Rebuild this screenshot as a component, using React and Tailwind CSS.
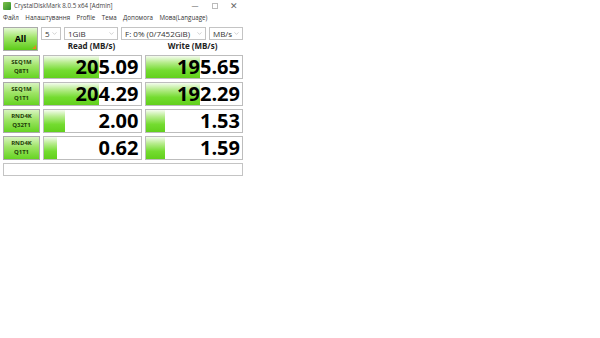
import { ChevronDown } from 'lucide-react'

const rows = [
  { a: 'SEQ1M', b: 'Q8T1', read: '205.09', rw: 55, write: '195.65', ww: 54 },
  { a: 'SEQ1M', b: 'Q1T1', read: '204.29', rw: 55, write: '192.29', ww: 54 },
  { a: 'RND4K', b: 'Q32T1', read: '2.00', rw: 21, write: '1.53', ww: 19 },
  { a: 'RND4K', b: 'Q1T1', read: '0.62', rw: 13, write: '1.59', ww: 19 },
]

const barBg = 'bg-[linear-gradient(to_bottom,#f4fcee_0%,#b6ec8c_30%,#74dc30_65%,#62d01c_100%)]'

function Combo({ label, className }) {
  return (
    <div className={`flex h-[13px] items-center justify-between border border-[#c4c4c4] bg-white pl-[3px] pr-[2px] text-[8px] text-[#333] ${className}`}>
      <span>{label}</span>
      <ChevronDown size={7} strokeWidth={1.5} className="text-[#999]" />
    </div>
  )
}

function Meter({ value, width }) {
  return (
    <div className="relative h-[24px] flex-1 border border-[#bdbdbd] bg-white">
      <div className={`absolute inset-y-0 left-0 ${barBg}`} style={{ width }} />
      <div className="relative flex h-full items-center justify-end pr-[2px] text-[20px] font-bold leading-none text-black">
        {value}
      </div>
    </div>
  )
}

export default function App() {
  return (
    <div className="h-[338px] w-[600px] bg-white font-['Open_Sans',sans-serif] text-[#222]">
      <div className="w-[246px]">
        {/* title bar */}
        <div className="flex h-[12px] items-center">
          <div className="ml-[3px] h-[8px] w-[8px] rounded-[1px] bg-[linear-gradient(135deg,#7fc04a,#2f8f2a)]" />
          <span className="ml-[3px] text-[6.2px] text-[#444]">CrystalDiskMark 8.0.5 x64 [Admin]</span>
          <div className="ml-auto flex items-center text-[#666]">
            <span className="w-[26px] text-center text-[7px]">—</span>
            <span className="mx-[4px] h-[6px] w-[6px] border border-[#bbb]" />
            <span className="w-[24px] text-center text-[9px]">✕</span>
          </div>
        </div>
        {/* menu */}
        <div className="flex h-[12px] items-center gap-[6.5px] pl-[3px] text-[6.2px] text-[#333]">
          <span>Файл</span>
          <span>Налаштування</span>
          <span>Profile</span>
          <span>Тема</span>
          <span>Допомога</span>
          <span>Мова(Language)</span>
        </div>

        <div className="flex flex-col px-[3px] pt-[3px]">
          <div className="flex gap-[3px]">
            <div className="relative flex h-[24px] w-[37px] items-center justify-center border border-[#aaa] bg-[linear-gradient(to_bottom,#e4f8d4_0%,#9ee466_45%,#5ccc18_100%)] text-[9px] font-bold text-black">
              All
              <div className="absolute bottom-[1px] right-[1px] h-0 w-0 border-l-[4px] border-t-[4px] border-l-transparent border-t-transparent border-b-0 border-r-[4px] border-r-[#e08a20] border-b-[#e08a20]" />
            </div>
            <div className="flex flex-1 flex-col">
              <div className="flex gap-[3px]">
                <Combo label="5" className="w-[20px]" />
                <Combo label="1GiB" className="w-[54px]" />
                <Combo label="F: 0% (0/7452GiB)" className="w-[85px]" />
                <Combo label="MB/s" className="w-[34px]" />
              </div>
              <div className="flex h-[12px] items-center">
                <div className="w-[101px] text-center text-[8px] font-bold text-[#222]">Read (MB/s)</div>
                <div className="flex-1 text-center text-[8px] font-bold text-[#222]">Write (MB/s)</div>
              </div>
            </div>
          </div>

          {rows.map((r, i) => (
            <div key={i} className="mt-[3px] flex gap-[3px]">
              <div className="flex h-[24px] w-[37px] flex-col items-center justify-center border border-[#aaa] bg-[linear-gradient(to_bottom,#d8f4c0_0%,#9ee466_45%,#66d422_100%)] text-[6px] font-bold leading-[9px] text-[#1f3d08]">
                <span>{r.a}</span>
                <span>{r.b}</span>
              </div>
              <Meter value={r.read} width={r.rw} />
              <Meter value={r.write} width={r.ww} />
            </div>
          ))}

          <div className="mt-[3px] h-[13px] border border-[#c4c4c4] bg-white" />
        </div>
      </div>
    </div>
  )
}
